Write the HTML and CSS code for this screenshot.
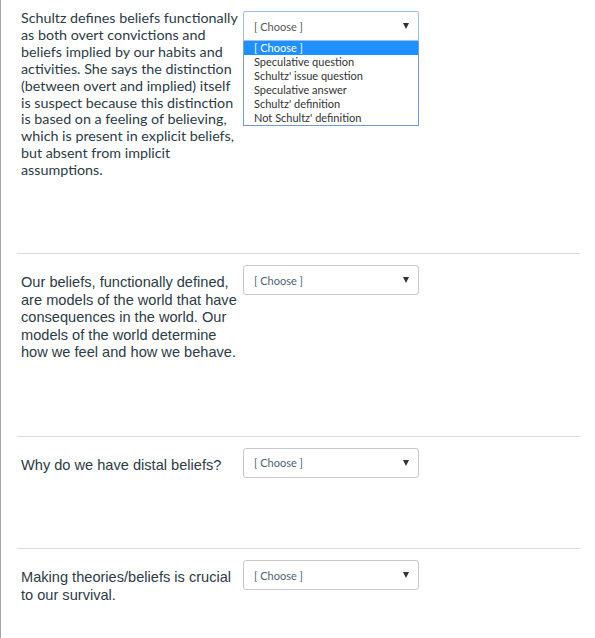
FILE: index.html
```html
<!DOCTYPE html>
<html lang="en">
<head>
    <meta charset="UTF-8">
    <meta name="viewport" content="width=device-width, initial-scale=1.0">
    <title>Quiz - Matching</title>
    <link rel="stylesheet" href="styles.css">
</head>
<body>
    <div class="quiz">
        <div class="question first">
            <div class="question-text lato">
                Schultz defines beliefs functionally as both overt convictions and beliefs implied by our habits and activities. She says the distinction (between overt and implied) itself is suspect because this distinction is based on a feeling of believing, which is present in explicit beliefs, but absent from implicit assumptions.
            </div>
            <div class="answer">
                <div class="select open">
                    <span>[ Choose ]</span>
                    <i class="arrow"></i>
                    <ul class="options">
                        <li class="selected">[ Choose ]</li>
                        <li>Speculative question</li>
                        <li>Schultz' issue question</li>
                        <li>Speculative answer</li>
                        <li>Schultz' definition</li>
                        <li>Not Schultz' definition</li>
                    </ul>
                </div>
            </div>
        </div>

        <div class="question">
            <div class="question-text">
                Our beliefs, functionally defined, are models of the world that have consequences in the world. Our models of the world determine how we feel and how we behave.
            </div>
            <div class="answer">
                <div class="select"><span>[ Choose ]</span><i class="arrow"></i></div>
            </div>
        </div>

        <div class="question">
            <div class="question-text">
                Why do we have distal beliefs?
            </div>
            <div class="answer">
                <div class="select"><span>[ Choose ]</span><i class="arrow"></i></div>
            </div>
        </div>

        <div class="question">
            <div class="question-text">
                Making theories/beliefs is crucial to our survival.
            </div>
            <div class="answer">
                <div class="select"><span>[ Choose ]</span><i class="arrow"></i></div>
            </div>
        </div>
    </div>
</body>
</html>
```

FILE: styles.css
```css
/* Estilos generales */
body {
    margin: 0;
    padding: 0;
    background-color: #fff;
    color: #2d3b45;
    font-family: "Liberation Sans", Arial, sans-serif;
}

.quiz {
    border-left: 1px solid #a5a5a5;
    height: 638px;
    overflow: hidden;
    padding-left: 16px;
    box-sizing: border-box;
}

/* Fila de pregunta */
.question {
    display: flex;
    align-items: flex-start;
    width: 563px;
    border-top: 1px solid #dcdcdc;
    padding-top: 11px;
}

.question.first {
    border-top: none;
}

.question-text {
    width: 220px;
    padding: 9px 2px 74px 4px;
    font-size: 14.6px;
    line-height: 17.5px;
}

.question-text.lato {
    font-family: Lato, sans-serif;
    font-size: 14.3px;
    line-height: 16.9px;
    margin-top: -1px;
    padding-top: 0;
    padding-bottom: 74px;
    color: #2d3b45;
}

/* Select */
.answer {
    width: 176px;
}

.select {
    position: relative;
    height: 30px;
    border: 1px solid #c8c8c8;
    border-radius: 3px;
    box-sizing: border-box;
    display: flex;
    align-items: center;
    padding: 0 10px;
    font-family: Lato, sans-serif;
    font-size: 11px;
    color: #4e6274;
}

.select span {
    flex-grow: 1;
}

.select.open {
    border-color: #9fbdf0;
    border-radius: 2px 2px 0 0;
    color: #555;
}

.arrow {
    width: 0;
    height: 0;
    border-left: 3.5px solid transparent;
    border-right: 3.5px solid transparent;
    border-top: 6px solid #333;
    margin-right: -1px;
}

/* Lista desplegada */
.options {
    position: absolute;
    top: 29px;
    left: -1px;
    width: 176px;
    box-sizing: border-box;
    margin: 0;
    padding: 0;
    list-style: none;
    background: #fff;
    border: 1px solid #7499dc;
    border-top: none;
}

.options li {
    height: 14px;
    line-height: 14px;
    padding-left: 10px;
    font-size: 11px;
    color: #333;
}

.options li.selected {
    background-color: #1e90ff;
    color: #fff;
}
```
